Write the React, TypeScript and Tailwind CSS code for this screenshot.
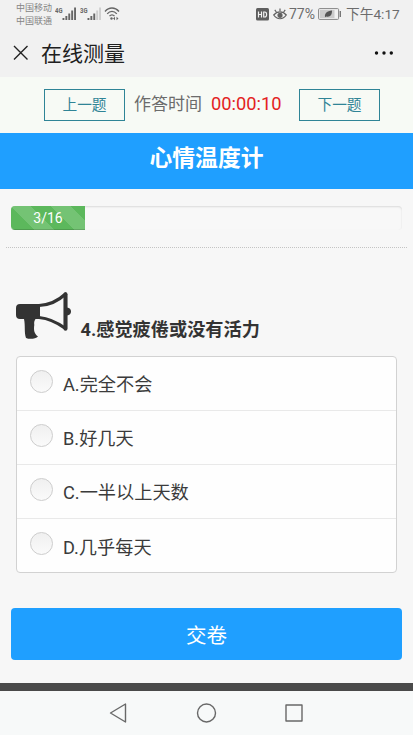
import React, { useState } from 'react';

const OPTIONS = ['A.完全不会', 'B.好几天', 'C.一半以上天数', 'D.几乎每天'];

const SignalIcon = ({ label, level }: { label: string; level: number }) => (
  <svg width="22" height="16" viewBox="0 0 22 16" className="shrink-0">
    <text x="0" y="6.5" fontSize="7" fontWeight="700" fill="#666" textLength="7.5" lengthAdjust="spacingAndGlyphs">
      {label}
    </text>
    {[2, 4, 6.5, 9.5, 12.5].map((h, i) => (
      <rect key={i} x={7.5 + i * 2.9} y={14 - h} width="1.9" height={h} fill={i < level ? '#666' : '#cfcfcf'} />
    ))}
  </svg>
);

const StatusBar = () => (
  <div className="flex h-7 items-start text-[#6c6c6c]">
    <div className="ml-4 mt-0.5 w-[38px] text-[9px] leading-[12.5px] whitespace-nowrap text-[#858585]">
      <div>中国移动</div>
      <div>中国联通</div>
    </div>
    <div className="ml-px mt-[6px] flex gap-[3px]">
      <SignalIcon label="4G" level={5} />
      <SignalIcon label="3G" level={3} />
    </div>
    <svg width="16" height="14" viewBox="0 0 16 14" className="ml-0.5 mt-[7px] shrink-0" fill="none" stroke="#666" strokeWidth="1.3">
      <path d="M1 4.500C5-.2 11-.2 15 4.500M3.200 6.900c2.800-3.400 6.800-3.400 9.600 0M5.500 9.200c1.400-1.700 3.600-1.700 5 0" />
      <circle cx="7.500" cy="11.500" r="1.200" fill="#666" stroke="none" />
      <path d="m9 11.500 2-1.700v3.400zM14.500 11.500l-2-1.700v3.400z" fill="#666" stroke="none" />
    </svg>
    <div className="ml-auto mr-[14px] mt-[6px] flex h-4 items-center whitespace-nowrap text-[14px] leading-4">
      <svg width="13" height="13" viewBox="0 0 13 13">
        <rect width="13" height="12.5" rx="1.5" fill="#5e5e5e" />
        <path d="M2.500 3.500v6M5.500 3.500v6M2.500 6.500h3M7.700 4v5h1.100q1.800 0 1.800-2.500T8.800 4z" fill="none" stroke="#f1f1f1" strokeWidth="1.2" />
      </svg>
      <svg width="14" height="14" viewBox="0 0 14 14" className="ml-1" fill="none" stroke="#606060" strokeWidth="1.2">
        <path d="M.7 8C4.200 3.700 9.800 3.700 13.300 8 9.800 13 4.200 13 .7 8zM7 4V1.500M3.300 5 1.800 2.800M10.700 5l1.500-2.200" />
        <circle cx="7" cy="8.300" r="2" fill="#606060" />
      </svg>
      <span className="ml-[2px] w-[27px]">77%</span>
      <svg width="24" height="12" viewBox="0 0 24 12" className="ml-[2px]">
        <rect x=".6" y=".6" width="20" height="10.800" rx="1" fill="#f1f1f1" stroke="#858585" strokeWidth="1" />
        <rect x="2" y="2" width="14.500" height="8" fill="#cbcbcb" />
        <path d="M7 9.300C6.500 5 9 3.200 14 2.500 14.200 7 12 9.500 8.300 8.500z" fill="#555" />
        <path d="M22.300 3v6" stroke="#777" strokeWidth="1.400" />
      </svg>
      <span className="ml-[4px] w-[53px] text-[13.7px]">下午4:17</span>
    </div>
  </div>
);

const TitleBar = () => (
  <div className="flex h-[49px] items-center text-[#202020]">
    <svg width="16" height="16" viewBox="0 0 16 16" className="ml-[13px]" stroke="#222" strokeWidth="1.4">
      <path d="m1 1 13.500 13.500M14.500 1 1 14.500" />
    </svg>
    <h1 className="ml-3 pt-1 text-[21px] leading-none">在线测量</h1>
    <svg width="20" height="4" viewBox="0 0 20 4" className="ml-auto mr-[19px]" fill="#111">
      <circle cx="2.500" cy="2" r="1.700" />
      <circle cx="10" cy="2" r="1.700" />
      <circle cx="17.300" cy="2" r="1.700" />
    </svg>
  </div>
);

const NavButton = ({ children }: { children: React.ReactNode }) => (
  <button className="h-8 w-[81px] border border-[#2f8496] text-[14.700px] leading-none text-[#2f8496]">{children}</button>
);

const Megaphone = () => (
  <svg width="56" height="49" viewBox="0 0 56 49" className="shrink-0">
    <path
      d="M4 12h20v15H19.500c-1 1.500-1.700 3-1.200 6-.8 5 0 9 3.700 11.500-2 2.500-9 3-12 1.500C8 40 9.500 34 8 27H4q-4 0-4-4v-7q0-4 4-4z"
      fill="#333"
    />
    <path d="M23 13.500C34 13 42 9 49.500 2v34.500C42 31 34 26.500 23 25.500" fill="none" stroke="#333" strokeWidth="3.200" strokeLinejoin="round" />
    <path d="M49.500 2.200v34.500" stroke="#333" strokeWidth="4" strokeLinecap="round" />
    <path d="M51 15.500q4 .5 4 4t-4 4z" fill="#333" />
  </svg>
);

export default function App() {
  const [selected, setSelected] = useState<number | null>(null);

  return (
    <div className="flex h-[735px] w-[413px] flex-col overflow-hidden bg-[#f7f7f7] font-[Roboto,'Noto_Sans_CJK_SC',sans-serif]">
      <header className="bg-[#f1f1f1]">
        <StatusBar />
        <TitleBar />
      </header>

      <div className="flex h-[55.500px] items-start bg-[#f7faf5] pt-3 pl-11">
        <NavButton>上一题</NavButton>
        <div className="ml-[9px] flex h-[30px] w-[165px] items-center whitespace-nowrap leading-none">
          <span className="text-[17px] text-[#6b6b6b]">作答时间</span>
          <span className="ml-[9px] text-[18.300px] text-[#e32222]">00:00:10</span>
        </div>
        <NavButton>下一题</NavButton>
      </div>

      <div className="flex h-[56.500px] items-center justify-center bg-[#1f9fff] pb-0.5 text-[22.800px] font-bold leading-none text-white">
        心情温度计
      </div>

      <div className="mx-[11px] mt-[17px] h-6 shrink-0 overflow-hidden rounded bg-[#f8f8f8] shadow-[inset_0_1px_2px_rgba(0,0,0,0.12)]">
        <div className="h-full w-[74px] bg-[#5cb85c] bg-[linear-gradient(45deg,rgba(255,255,255,.15)_25%,transparent_25%,transparent_50%,rgba(255,255,255,.15)_50%,rgba(255,255,255,.15)_75%,transparent_75%)] bg-size-[40px_40px] text-center text-[14px] leading-6 text-white shadow-[inset_0_-1px_0_rgba(0,0,0,0.15)]">
          3/16
        </div>
      </div>
      <div className="mx-[6px] mt-[17px] border-t border-dotted border-[#c4c4c4]" />

      <div className="mt-[44px] ml-4 flex h-[49px] items-end">
        <Megaphone />
        <h2 className="ml-[8.500px] text-[18.200px] font-bold leading-[23px] text-[#333]">4.感觉疲倦或没有活力</h2>
      </div>

      <ul className="mx-4 mt-[15px] h-[217px] shrink-0 rounded border border-[#d2d2d2] bg-[#fefefe]">
        {OPTIONS.map((option, i) => (
          <li
            key={option}
            onClick={() => setSelected(i)}
            className="flex h-[54px] items-center border-b border-[#e9e9e9] pl-[13px] last:border-b-0"
          >
            <span className="mb-[5px] flex size-[23px] items-center justify-center rounded-full border border-[#cdcdcd] bg-linear-to-b from-[#f0f0f0] to-[#fafafa]">
              {selected === i && <span className="size-2.5 rounded-full bg-[#1f9fff]" />}
            </span>
            <span className="ml-2.5 pt-1 text-[18.200px] leading-none text-[#3b3b3b]">{option}</span>
          </li>
        ))}
      </ul>

      <button className="mx-[11px] mt-[35px] h-[52px] shrink-0 rounded bg-[#1f9fff] pt-1 text-[20.500px] leading-none text-white">
        交卷
      </button>

      <div className="mt-[23px] h-2 shrink-0 bg-[#4a4a4a]" />
      <nav className="flex flex-1 items-center bg-[#f7f9f9] pl-[109px]">
        <svg width="196" height="22" viewBox="0 0 196 22" fill="none" stroke="#686868" strokeWidth="1.400" strokeLinejoin="round">
          <path d="M16.500 2v18L1.500 11z" />
          <circle cx="97.500" cy="11" r="9" />
          <rect x="177" y="3" width="16" height="16" />
        </svg>
      </nav>
    </div>
  );
}
